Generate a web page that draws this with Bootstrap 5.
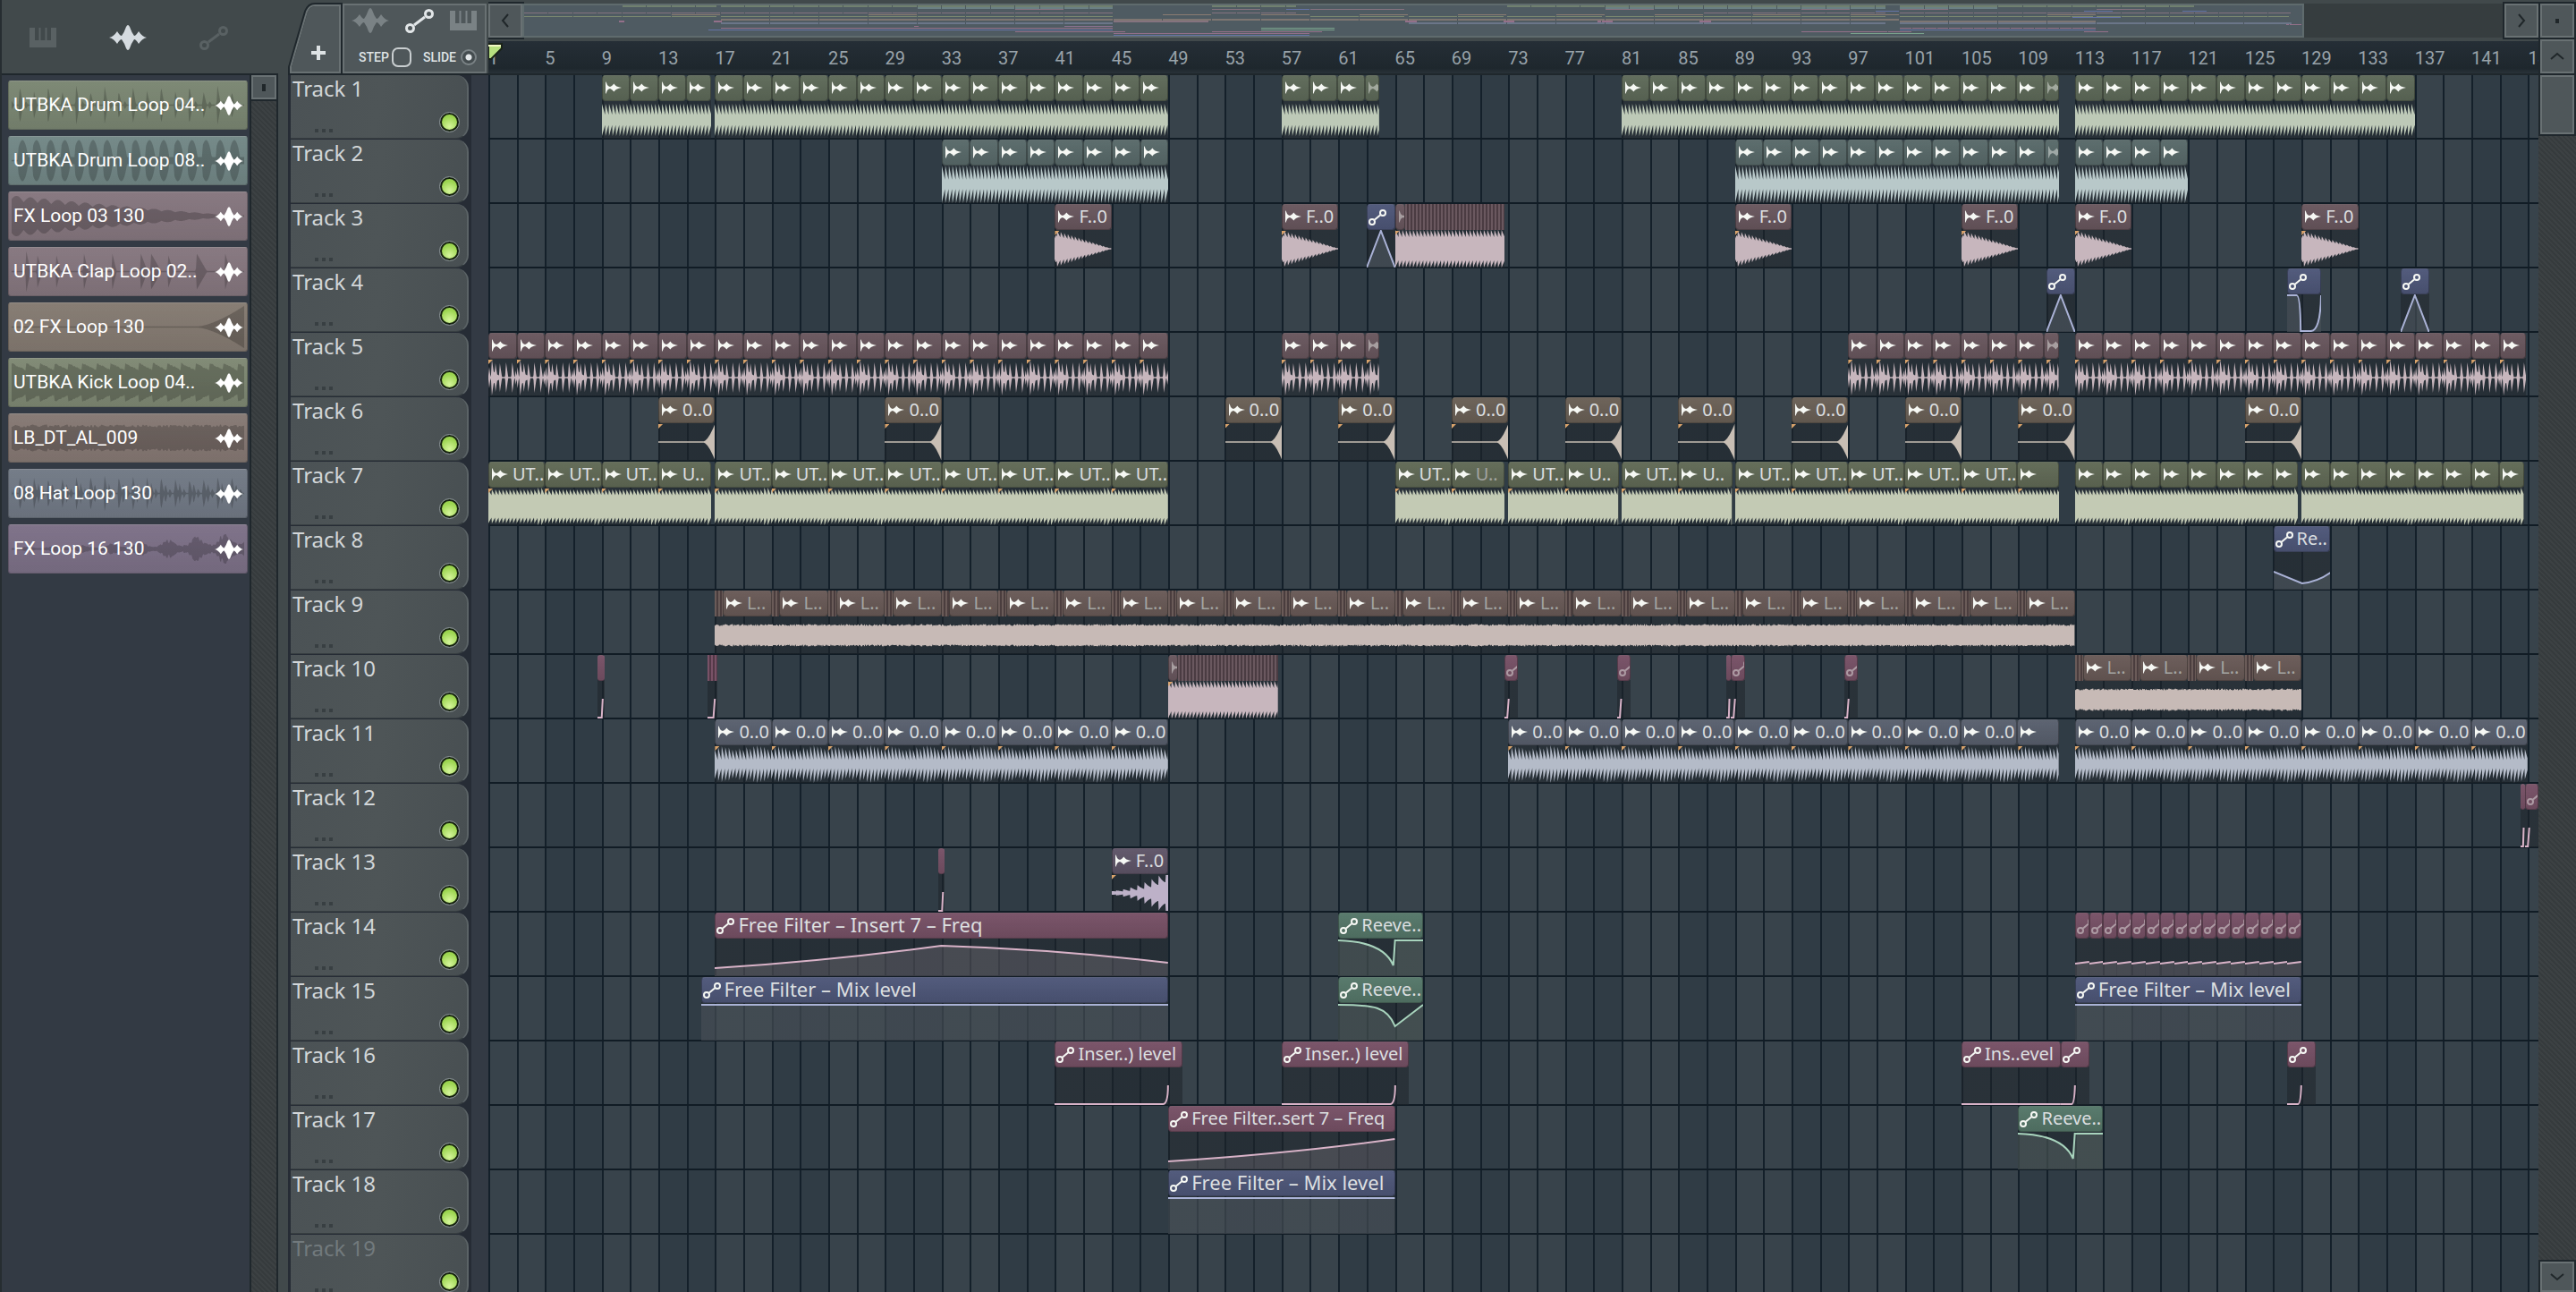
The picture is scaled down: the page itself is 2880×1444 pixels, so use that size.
<!DOCTYPE html>
<html lang="en">
<head>
<meta charset="utf-8">
<meta name="viewport" content="width=device-width, initial-scale=1">
<title>Playlist</title>
<link href="https://cdn.jsdelivr.net/npm/bootstrap@5.3.0/dist/css/bootstrap.min.css" rel="stylesheet">
<style>
:root{--chrome:#41494b;--edge:#1f272c;--bevel:#697173;--face:#4f575a}
body{font-family:"Noto Sans","Open Sans",sans-serif;background:var(--chrome);color:#d5dadc}
button{font:inherit;color:inherit;padding:0;border:0;background:none}
svg{display:block;flex:none}
.picker{width:311px;border-left:2px solid #262d31}
.strip-top{height:82px}
.picker-tabs{padding:26px 52px 0 27px}
.picker-tabs button{width:44px;height:32px;color:#596163}
.picker-tabs button.on{color:#d5dbe0}
.picker-body{border-top:2px solid var(--edge)}
.picker-list{background:#333a44;padding:6px 2px 0 7px;gap:7px;border-right:2px solid var(--edge);min-width:0}
.sample{height:55px;border-radius:3px;border:1px solid rgba(0,0,0,.2);border-top-color:rgba(255,255,255,.2);background:linear-gradient(rgba(255,255,255,.02),rgba(0,0,0,.08)),var(--c);color:#fff;font-family:Roboto,"Noto Sans",sans-serif;font-size:21px;line-height:53px}
.sample .shape{position:absolute;inset:0 3px;width:auto}
.sample .shape svg{width:100%;height:100%;fill:rgba(0,0,0,.2)}
.sample .txt{position:relative;padding-left:5px}
.sample .ico{position:relative;margin-right:4px}
.hatch{background:repeating-linear-gradient(45deg,#363b3d 0 2px,#3c4143 2px 4px)}
.picker-scroll{width:30px;border-right:2px solid var(--edge)}
.key{background:var(--face);border:2px solid var(--bevel);color:#20272a;display:flex;align-items:center;justify-content:center;outline:2px solid var(--edge);flex:none}
.gutter{width:11px}
.heads{width:224px}
.corner{width:61px;height:80px;margin-top:3px}
.corner svg{position:absolute;left:0;top:0}
.tools{width:161px;height:78px;margin-top:4px;background:var(--face);border:2px solid var(--bevel);padding:3px 9px 4px 8px}
.tools button{color:#7a8285}
.tools button.on{color:#e2e6e8}
.tools label{font-family:Roboto,sans-serif;font-size:14px;line-height:24px;font-weight:500;color:#dfe3e5}
.tick{appearance:none;width:22px;height:22px;border:2px solid #c9ced0;border-radius:7px;margin:0 0 0 3px}
.dot{appearance:none;width:18px;height:18px;border:2px solid #7b8386;border-radius:50%;margin:0 0 0 5px;background:radial-gradient(circle,#e2e6e8 0 3px,#444c4f 4px)}
.nav-row{height:42px;background:#363d3f;border-top:4px solid var(--chrome)}
.overview{flex:0 0 86.9%;background:#4f5b62;border:2px solid #5f6b6d}
.overview .seg{position:absolute;display:flex}
.overview .seg i{border-right:1px solid rgba(70,80,86,.8);background:var(--o)}
.ruler{margin-top:4px;height:38px;background:linear-gradient(#252e36,#1e272d 80%,#2d363d);font-family:Roboto,"Noto Sans",sans-serif;font-size:20px;line-height:38px;color:#98a2a9;overflow:hidden}
.ruler span{flex:none;white-space:nowrap}
.playhead{position:absolute;left:0;top:2px}
.right-col{width:42px;padding:0 2px}
.thumb{height:66px;background:var(--face);border:2px solid var(--bevel);outline:2px solid var(--edge)}
.body-row{border-top:2px solid var(--edge)}
.track-head{height:72px;background:#262c35;border-right:19px solid #333a44}
.face{width:199px;height:71px;margin-left:3px;border-radius:0 14px 14px 0;background:linear-gradient(100deg,#4b5255,#4e5557 50%,#484f52);border-right:2px solid #5b6366;border-bottom:1px solid #383f42;padding:0 9px 0 2px}
.face .nm{font-size:24px;line-height:30px;color:#d2d6d8}
.track-head.off .nm{color:#727a7d}
.more{width:20px;height:4px;margin-left:25px;background:repeating-linear-gradient(90deg,#383f42 0 4px,transparent 4px 8px)}
.led{appearance:none;width:21px;height:21px;margin:12px 0 1px;border-radius:50%;border:2px solid #17240f;outline:1px solid #8b9396;background:radial-gradient(circle at 50% 80%,#d5f59b,#9bd44f 70%)}
.lanes{background:#303c45;overflow:hidden}
.cols{position:absolute;inset:0;display:flex}
.cols div{flex:none;border-left:2px solid #14202a}
.cols .lt{background:#38434b}
.lane{height:72px;position:relative;border-bottom:2px solid #111c25}
.take{position:absolute;top:0;height:71px;background:linear-gradient(transparent 28px,rgba(30,36,42,.55) 28px);overflow-x:clip}
.cap-row{height:29px;display:flex}
.cap{flex:1 1 0;min-width:0;overflow-x:clip;white-space:nowrap;display:flex;height:29px;border:1px solid rgba(0,0,0,.28);border-top-color:rgba(255,255,255,.1);border-radius:4px;background:linear-gradient(rgba(255,255,255,.02),rgba(0,0,0,.1)),var(--h);padding-left:3px;font-size:20px;line-height:25px;color:#dcdfe0}
.cap svg{margin-top:6px;margin-right:5px;color:#f6f8f4}
.cap.env{padding-left:1px}
.cap.env svg{margin-top:5px;margin-right:4px}
.cap.wide{font-size:22px}
.cap.dim{color:#a3a5a2}
.cap.faint svg{opacity:.45}
.cap.bare{padding:0;border-width:1px 0;border-radius:3px}
.bars{flex:none;height:29px;background:repeating-linear-gradient(90deg,var(--h) 0 2px,rgba(30,20,26,.42) 2px 4px),var(--h)}
.wv{position:absolute;left:0;top:29px;width:100%;height:42px}
.wv path{vector-effect:non-scaling-stroke}
.flags{position:absolute;left:0;top:30px;width:100%;display:flex}
.flags b{flex:1 1 0}
.flags b::before{content:"";display:block;width:5px;height:5px;background:#dba46b;clip-path:polygon(0 0,100% 0,0 100%)}
</style>
</head>
<body class="vh-100 overflow-hidden d-flex">
<svg width="0" height="0" class="position-absolute" aria-hidden="true">
 <symbol id="wave" viewBox="-21 -14 42 28"><path fill="currentColor" d="M-21,0Q-16,-1-12,-7Q-9,-2-7,-2Q-4,-6-2,-12Q0,-16 2,-12Q4,-6 7,-2Q9,-2 12,-7Q16,-1 21,0Q16,1 12,7Q9,2 7,2Q4,6 2,12Q0,16-2,12Q-4,6-7,2Q-9,2-12,7Q-16,1-21,0Z"/></symbol>
 <symbol id="half" viewBox="0 0 18 14"><path fill="currentColor" d="M0,0Q1,1 2,4Q3,5.500 5,6Q7,5.500 9.500,2.500Q11,6 18,7Q11,8 9.500,11.500Q7,8.500 5,8Q3,8.500 2,10Q1,13 0,14Z"/></symbol>
 <symbol id="env" viewBox="0 0 32 27"><g fill="none" stroke="currentColor" stroke-width="3"><circle cx="5.500" cy="21.500" r="4"/><circle cx="26.500" cy="5.500" r="4"/><path d="M10,18L22,9"/></g></symbol>
 <symbol id="envs" viewBox="0 0 20 18"><g fill="none" stroke="currentColor" stroke-width="2"><circle cx="4" cy="14" r="3"/><circle cx="16" cy="4" r="3"/><path d="M7,11.500L13,6.500"/></g></symbol>
 <symbol id="keys" viewBox="0 0 30 22"><path fill="currentColor" d="M0,0H6V14H10.500V0H12.500V14H17.500V0H19.500V14H24V0H30V22H0Z"/></symbol>
</svg>

<aside class="picker d-flex flex-column flex-shrink-0">
 <div class="picker-tabs strip-top d-flex justify-content-between flex-shrink-0">
  <button aria-label="Patterns" class="d-flex align-items-center"><svg width="30" height="22" class="ms-1"><use href="#keys"/></svg></button>
  <button aria-label="Audio clips" class="on d-flex align-items-center ms-4"><svg width="42" height="28"><use href="#wave"/></svg></button>
  <button aria-label="Automation" class="d-flex align-items-center ms-4"><svg width="32" height="27" class="ms-2"><use href="#env"/></svg></button>
 </div>
 <div class="picker-body d-flex flex-fill">
  <div class="picker-list d-flex flex-column flex-fill" id="samples"></div>
  <div class="picker-scroll hatch d-flex flex-column flex-shrink-0"><button class="key w-100" aria-label="Scroll" style="height:27px"><svg width="4" height="8"><rect width="4" height="8" fill="currentColor"/></svg></button></div>
 </div>
</aside>
<div class="gutter flex-shrink-0"></div>

<main class="d-flex flex-column flex-fill overflow-hidden">
 <div class="strip-top d-flex flex-shrink-0">
  <div class="heads d-flex flex-shrink-0">
   <button class="corner position-relative" aria-label="Add track"><svg width="61" height="80"><path d="M2,79V72L20,10Q23,2 30,2H59V79Z" fill="#4f575a" stroke="#1f272c" stroke-width="4"/><path d="M3,78V72L21,10Q24,3 30,3H58V78Z" fill="none" stroke="#697173" stroke-width="2"/><path d="M26,56H42M34,48V64" stroke="#dde2e4" stroke-width="4"/></svg></button>
   <div class="tools d-flex flex-column justify-content-between">
    <div class="d-flex justify-content-between align-items-center">
     <button aria-label="Audio"><svg width="42" height="28"><use href="#wave"/></svg></button>
     <button aria-label="Automation" class="on"><svg width="32" height="27"><use href="#env"/></svg></button>
     <button aria-label="Piano"><svg width="30" height="22"><use href="#keys"/></svg></button>
    </div>
    <div class="d-flex justify-content-between">
     <span class="d-flex align-items-center ms-2"><label for="step">STEP</label><input id="step" type="checkbox" class="tick"></span>
     <span class="d-flex align-items-center"><label for="slide">SLIDE</label><input id="slide" type="radio" class="dot" checked></span>
    </div>
   </div>
  </div>
  <div class="flex-fill overflow-hidden">
   <div class="nav-row d-flex">
    <button class="key" style="width:38px" aria-label="Scroll left"><svg width="10" height="16"><path d="M8,1L2,8L8,15" fill="none" stroke="currentColor" stroke-width="2"/></svg></button>
    <div class="overview position-relative" id="overview"></div>
    <button class="key ms-auto" style="width:38px" aria-label="Scroll right"><svg width="10" height="16"><path d="M2,1L8,8L2,15" fill="none" stroke="currentColor" stroke-width="2"/></svg></button>
   </div>
   <div class="ruler d-flex position-relative" id="ruler"></div>
  </div>
  <div class="right-col flex-shrink-0">
   <button class="key w-100" aria-label="Options" style="height:38px;margin-top:4px"><svg width="4" height="5"><rect width="4" height="5" fill="currentColor"/></svg></button>
   <button class="key w-100" aria-label="Scroll up" style="height:38px;margin-top:2px"><svg width="16" height="10"><path d="M1,8L8,2L15,8" fill="none" stroke="currentColor" stroke-width="2"/></svg></button>
  </div>
 </div>
 <div class="body-row d-flex flex-fill overflow-hidden">
  <div class="heads flex-shrink-0" id="heads"></div>
  <div class="lanes flex-fill position-relative" id="lanes"><div class="cols" id="cols"></div></div>
  <div class="right-col hatch flex-shrink-0 d-flex flex-column justify-content-between">
   <div class="thumb"></div>
   <button class="key w-100" aria-label="Scroll down" style="height:34px"><svg width="16" height="10"><path d="M1,2L8,8L15,2" fill="none" stroke="currentColor" stroke-width="2"/></svg></button>
  </div>
 </div>
</main>

<script src="https://cdn.jsdelivr.net/npm/bootstrap@5.3.0/dist/js/bootstrap.bundle.min.js"></script>
<script>
const BARS = 144.72, PX = 16;
const pct = b => (b / BARS * 100) + '%';
const $ = id => document.getElementById(id);
const hash = n => { const s = Math.sin(n * 127.1 + 3.7) * 43758.5453; return s - Math.floor(s); };
const saw = (x, p) => 1 - (x % p) / p;
const hit = (x, list) => Math.max(0.7, ...list.map(([p, a, w]) => x < p ? a * Math.max(0, 1 - (p - x) / 1.2) : a * Math.max(0, 1 - (x - p) / w)));

// amplitude (0..21) at x pixels into a take; t is the position from 0 to 1
const shapes = {
  drum: x => 4 + 14 * saw(x, 4),
  drum8: x => 3 + 18 * saw(x, 4),
  clap: x => hit(x % 32, [[1, 12, 1.5], [4, 20, 3], [4, 8, 11], [8, 16, 2.5], [13, 16, 2.5], [20, 17, 2.5], [27, 17, 2.5], [31, 8, 1]]),
  kick: x => 11.5 + 7.5 * saw(x, 4) + (x % 64 > 54 ? 2 * saw(x, 4) : 0),
  noise: x => 10.5 + 2 * hash(Math.floor(x)),
  hat: x => 3 + 18 * saw(x, 4) * (.72 + .28 * hash(Math.floor(x / 4) % 16)),
  decay: (x, t) => Math.max(.7, 21 * Math.pow(1 - t, .95) * (.62 + .38 * saw(x + 1, 4)) * Math.min(1, .6 + x / 4)),
  loop: x => 12 + 9 * saw(x, 4),
  flare: (x, t) => t > .8 ? .7 + 19.5 * Math.pow((t - .8) / .2, 1.6) : .7,
  grow: (x, t) => Math.min(20, 2 + 16 * t * t + 8 * t * Math.pow(saw(x + 3, 8), 2) - 5 * t * (1 - saw(x + 3, 8)))
};
function outline(fn, px, mid, step) {
  const top = [], bot = [];
  for (let x = 0; x <= px; x += step) {
    const a = fn(x, x / px);
    top.push(x + ',' + (mid - a).toFixed(1)); bot.unshift(x + ',' + (mid + a).toFixed(1));
  }
  return 'M' + top.join('L') + 'L' + bot.join('L') + 'Z';
}

// header colour, waveform or curve colour, overview colour, tint under a curve
const inks = {
  drum: ['#5f6b5a', '#bdc9b7', '#70806f'], drum8: ['#5a6b6b', '#b8c8c9', '#6b8084'],
  rose: ['#6a585f', '#c7b6bd', '#85737f'], tan: ['#6b6157', '#c8beb4', '#8a7c72'],
  kick: ['#626b57', '#c3cab4', '#7b8870'], bark: ['#6a5b58', '#c7bab6', '#7e7672'],
  hat: ['#5a616f', '#b4bbc8', '#6b7689'], plum: ['#605669', '#bdb1c8', '#8a7390'],
  blue: ['#4f587a', '#aab2d6', '#6573a5', '#a4b0ba'], wine: ['#785267', '#d9b3c8', '#94708a', '#c4aeb8'],
  fern: ['#56786a', '#a8d4bd', '#7ba48e', '#a8beae']
};
// path of each automation curve, and whether the area under it is tinted
const curves = {
  peak: ['M0,42L50,1L100,42', 1], gate: ['M0,1H28Q39,1 40,41H68Q98,42 100,1', 1],
  dip: ['M0,22L50,35Q78,33 100,23', 1], rise: ['M0,33Q25,25 50,8Q75,12 100,27', 1],
  ramp: ['M0,33Q55,24 100,8', 1], flat: ['M0,2H100', 1],
  duck: ['M0,2C40,3 58,14 65,30L67,2H100', 1], duck2: ['M0,2C42,2 58,4 67,26L100,2', 1],
  tail: ['M0,41H85Q89,41 89,20', 0], tail2: ['M0,41H38Q48,41 50,20', 0],
  spike: ['M0,41H20L30,20', 0], late: ['M0,41H60L74,20', 0], step: ['M0,28L100,26', 1],
  low: ['M0,41H100', 0]
};
// [track, start bar, end bar, ink, shape, options]
const takes = [
  [1, 9, 16.75, 'drum', 'drum', {step: 2}], [1, 17, 49, 'drum', 'drum', {step: 2}], [1, 57, 63.9, 'drum', 'drum', {step: 2, faint: 1}],
  [1, 81, 111.9, 'drum', 'drum', {step: 2, faint: 1}], [1, 113, 137, 'drum', 'drum', {step: 2}],
  [2, 33, 49, 'drum8', 'drum8', {step: 2}], [2, 89, 111.9, 'drum8', 'drum8', {step: 2, faint: 1}], [2, 113, 121, 'drum8', 'drum8', {step: 2}],
  ...[41, 57, 89, 105, 113, 129].map(b => [3, b, b + 4, 'rose', 'decay', {label: 'F..0', flag: 1}]),
  [3, 63, 65, 'blue', 'peak', {}], [3, 65, 72.75, 'rose', 'loop', {buzz: 1, flag: 1}],
  [4, 111, 113, 'blue', 'peak', {}], [4, 128, 130.4, 'blue', 'gate', {}], [4, 136, 138, 'blue', 'peak', {}],
  [5, 1, 49, 'rose', 'clap', {step: 2, flag: 1}], [5, 57, 63.9, 'rose', 'clap', {step: 2, flag: 1, faint: 1}],
  [5, 97, 111.9, 'rose', 'clap', {step: 2, flag: 1, faint: 1}], [5, 113, 144.85, 'rose', 'clap', {step: 2, flag: 1}],
  ...[13, 29, 53, 61, 69, 77, 85, 93, 101, 109, 125].map(b => [6, b, b + 4, 'tan', 'flare', {label: '0..0', flag: 1}]),
  [7, 1, 16.75, 'kick', 'kick', {step: 4, label: 'UT..', last: 'U..', flag: 1}], [7, 17, 49, 'kick', 'kick', {step: 4, label: 'UT..', flag: 1}],
  [7, 65, 72.75, 'kick', 'kick', {step: 4, label: 'UT..', last: 'U..', dimLast: 1, flag: 1}],
  [7, 73, 80.8, 'kick', 'kick', {step: 4, label: 'UT..', last: 'U..', flag: 1}], [7, 81, 88.8, 'kick', 'kick', {step: 4, label: 'UT..', last: 'U..', flag: 1}],
  [7, 89, 111.9, 'kick', 'kick', {step: 4, label: 'UT..', last: '', flag: 1}],
  [7, 113, 128.75, 'kick', 'kick', {step: 2}], [7, 129, 144.7, 'kick', 'kick', {step: 2}],
  [8, 127, 131, 'blue', 'dip', {label: 'Re..'}],
  [9, 17, 113, 'bark', 'noise', {step: 4, label: 'L..', lead: .55}],
  [10, 8.7, 9.2, 'wine', 'late', {bare: 1}], [10, 16.45, 17.15, 'wine', 'late', {bare: 1, buzz: 1}],
  [10, 49, 56.75, 'rose', 'loop', {buzz: 1, flag: 1}],
  [10, 72.7, 73.7, 'wine', 'spike', {faint: 1}], [10, 80.7, 81.65, 'wine', 'spike', {faint: 1}], [10, 88.4, 88.7, 'wine', 'late', {bare: 1}],
  [10, 88.7, 89.7, 'wine', 'spike', {faint: 1}], [10, 96.7, 97.7, 'wine', 'spike', {faint: 1}],
  [10, 113, 129, 'bark', 'noise', {step: 4, label: 'L..', lead: .55}],
  [11, 17, 49, 'hat', 'hat', {step: 4, label: '0..0', flag: 1}], [11, 73, 111.9, 'hat', 'hat', {step: 4, label: '0..0', last: '', flag: 1}],
  [11, 113, 144.95, 'hat', 'hat', {step: 4, label: '0..0', flag: 1}],
  [12, 144.45, 144.75, 'wine', 'late', {bare: 1}], [12, 144.75, 145.75, 'wine', 'spike', {faint: 1}],
  [13, 32.75, 33.2, 'wine', 'late', {bare: 1}], [13, 45, 49, 'plum', 'grow', {label: 'F..0', flag: 1}],
  [14, 17, 49, 'wine', 'rise', {label: 'Free Filter – Insert 7 – Freq', wide: 1}], [14, 61, 67, 'fern', 'duck', {label: 'Reeve..'}],
  ...Array.from({length: 16}, (_, i) => [14, 113 + i, 114 + i, 'wine', 'step', {faint: 1}]),
  [15, 16, 49, 'blue', 'flat', {label: 'Free Filter – Mix level', wide: 1}], [15, 61, 67, 'fern', 'duck2', {label: 'Reeve..'}],
  [15, 113, 129, 'blue', 'flat', {label: 'Free Filter – Mix level', wide: 1}],
  [16, 41, 50, 'wine', 'tail', {label: 'Inser..) level'}], [16, 57, 66, 'wine', 'tail', {label: 'Inser..) level'}],
  [16, 105, 112, 'wine', 'low', {label: 'Ins..evel'}], [16, 112, 114, 'wine', 'tail2', {}], [16, 128, 130, 'wine', 'tail2', {}],
  [17, 49, 65, 'wine', 'ramp', {label: 'Free Filter..sert 7 – Freq'}], [17, 109, 115, 'fern', 'duck', {label: 'Reeve..'}],
  [18, 49, 65, 'blue', 'flat', {label: 'Free Filter – Mix level', wide: 1}]
];
const halfIcon = '<svg width="18" height="14"><use href="#half"/></svg>';
const envIcon = '<svg width="20" height="18"><use href="#envs"/></svg>';

// columns, two bars each, shaded in groups of four bars
for (let b = 1; b < BARS + 1; b += 2) {
  const d = document.createElement('div');
  d.style.width = pct(2);
  if ((b - 1) % 8 < 4) d.className = 'lt';
  $('cols').append(d);
}
let html = '';
for (let b = 1; b < BARS + 1; b += 4) html += `<span style="width:${pct(4)}">${b}</span>`;
$('ruler').innerHTML = html + '<svg class="playhead" width="18" height="20"><path d="M0,1H15V6L3,18H0Z" fill="#b7e07f" stroke="#1a2318" stroke-width="2"/><path d="M0,3H14" stroke="#f1f8c4" stroke-width="2"/></svg>';

const lanes = [];
let heads = '';
for (let n = 1; n <= 19; n++) {
  heads += `<div class="track-head${n > 18 ? ' off' : ''}"><div class="face d-flex flex-column"><label class="nm" for="t${n}">Track ${n}</label>
    <div class="d-flex align-items-end justify-content-between"><div class="more"></div><input id="t${n}" class="led" type="checkbox" checked></div></div></div>`;
  const lane = document.createElement('div');
  lane.className = 'lane';
  $('lanes').append(lane);
  lanes.push(lane);
}
$('heads').innerHTML = heads;

for (const [track, from, to, ink, shape, o] of takes) {
  const [h, w, ov, tint] = inks[ink], len = to - from, step = o.step || len, isEnv = shape in curves;
  let caps = '', flags = '', segs = '';
  for (let b = 0; b < len - .01; b += step) {
    const part = Math.min(step, len - b), cut = part < step * .98;
    const label = cut && 'last' in o ? o.last : (o.label || '');
    if (o.lead) caps += `<div class="bars" style="width:${o.lead / len * 100}%"></div>`;
    const cls = ['cap', isEnv && 'env', o.bare && 'bare', o.wide && 'wide', (o.lead || cut && o.dimLast) && 'dim', (o.buzz || o.faint && (cut || !o.step)) && 'faint'].filter(Boolean).join(' ');
    if (o.buzz) {
      caps += o.bare ? '<div class="bars w-100"></div>' : `<div class="cap faint" style="flex:none;width:11px">${halfIcon}</div><div class="bars flex-fill"></div>`;
    } else {
      caps += `<div class="${cls}" style="flex-grow:${Math.round((part - (o.lead || 0)) * 100)}">${o.bare ? '' : isEnv ? envIcon : halfIcon}${label}</div>`;
    }
    flags += `<b style="flex-grow:${Math.round(part * 100)}"></b>`;
    segs += `<i style="width:${part / len * 100}%"></i>`;
  }
  let art;
  if (isEnv) {
    const [d, fill] = curves[shape];
    art = `<svg class="wv" viewBox="0 0 100 42" preserveAspectRatio="none">${fill ? `<path d="${d}V42H0Z" fill="${tint}" fill-opacity=".2"/>` : ''}<path d="${d}" fill="none" stroke="${w}" stroke-width="2"/></svg>`;
  } else {
    art = `<svg class="wv" viewBox="0 0 ${len * PX} 42" preserveAspectRatio="none"><path fill="${w}" d="${outline(shapes[shape], len * PX, 21, .5)}"/></svg>`;
  }
  const el = document.createElement('div');
  el.className = 'take';
  el.style.cssText = `left:${pct(from - 1)};width:${pct(len)};--h:${h}`;
  el.innerHTML = `<div class="cap-row">${caps}</div>${art}${o.flag ? `<div class="flags">${flags}</div>` : ''}`;
  lanes[track - 1].append(el);

  const seg = document.createElement('div');
  seg.className = 'seg';
  seg.style.cssText = `left:${pct(from - 1)};width:${pct(len)};top:${(track - 1) * 5.67}%;height:${[1, 2, 9, 10, 11].includes(track) ? 2 : 1}px;--o:${ov}`;
  seg.innerHTML = segs;
  $('overview').append(seg);
}

// sample picker
const W = 270;
const samples = [
  ['UTBKA Drum Loop 04..', '#7b8773', x => hit((x + 10) % 16.4, [[3, 22 - (x % 33 > 16 ? 6 : 0), 4], [10, 5, 3]])],
  ['UTBKA Drum Loop 08..', '#738887', x => x < 8 ? .7 : Math.max(4, 23 * Math.pow(Math.sin(Math.min(1, ((x - 8) % 16.4) / 11) * 2.6 + .5), .6) || 4)],
  ['FX Loop 03 130', '#86777f', (x, t) => Math.max(1, 22 * Math.pow(1 - t, 1.1) * (.75 + .3 * Math.abs(Math.sin((x + 2) / 16 * Math.PI))))],
  ['UTBKA Clap Loop 02..', '#86777f', x => hit(x, [[17, 23, 5], [30, 18, 6], [52, 18, 5], [84, 20, 5], [117, 20, 5], [150, 20, 8], [162, 20, 12], [182, 18, 6], [215, 20, 12], [248, 20, 6]])],
  ['02 FX Loop 130', '#857b72', (x, t) => t > .8 ? .7 + 23 * Math.pow((t - .8) / .2, 1.5) : .7],
  ['UTBKA Kick Loop 04..', '#7f8974', x => 13 + 8 * saw(x, 16.4) + 1.5 * hash(Math.floor(x))],
  ['LB_DT_AL_009', '#867974', x => 12 + 3 * hash(Math.floor(x / 2))],
  ['08 Hat Loop 130', '#727a86', x => hit((x + 9) % 16.4, [[2, 21 - 5 * hash(Math.floor(x / 16)), 4], [7, 12, 3], [12, 6, 3]])],
  ['FX Loop 16 130', '#7d7188', (x, t) => Math.max(1, (3 + 18 * t * t) * (.35 + .65 * Math.pow(Math.abs(Math.sin(x / 33 * Math.PI)), 3)) * (.6 + .4 * hash(Math.floor(x / 2))))]
];
$('samples').innerHTML = samples.map(([name, c, fn]) => `<button class="sample position-relative d-flex align-items-center justify-content-between text-nowrap flex-shrink-0" style="--c:${c}">
  <span class="shape"><svg viewBox="0 0 ${W} 53" preserveAspectRatio="none"><path d="${outline(fn, W, 26.5, 1)}"/></svg></span>
  <span class="txt">${name}</span><svg class="ico" width="32" height="26"><use href="#wave"/></svg></button>`).join('');
</script>
</body>
</html>
